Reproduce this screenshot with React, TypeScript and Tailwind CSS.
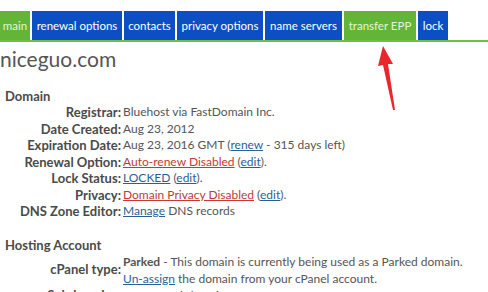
import React from "react";

const tabs = [
  { label: "main", w: "w-[30px]", active: true },
  { label: "renewal options", w: "w-[90px]" },
  { label: "contacts", w: "w-[51px]" },
  { label: "privacy options", w: "w-[86px]" },
  { label: "name servers", w: "w-[77px]" },
  { label: "transfer EPP", w: "w-[72px]", active: true },
  { label: "lock", w: "w-[30px]" },
];

function Row({ label, children }: { label: string; children: React.ReactNode }) {
  return (
    <div className="grid grid-cols-[122px_1fr] h-[16.5px] items-center">
      <div className="text-right font-bold text-[13px] text-[#4a4a4a] pr-[1px] whitespace-nowrap">{label}:</div>
      <div className="pl-[1px] whitespace-nowrap">{children}</div>
    </div>
  );
}

const red = "text-[#c23a36] underline";
const blue = "text-[#2d5f96] underline";

export default function App() {
  return (
    <div className="relative w-[488px] h-[292px] overflow-hidden bg-white text-[#555] font-['Lato',sans-serif] text-[12px] leading-[16px]">
      {/* tab bar */}
      <div className="pt-[11px] flex gap-[2px] border-b-2 border-[#6fbf45]">
        {tabs.map((t) => (
          <div
            key={t.label}
            className={`${t.w} h-[29px] flex items-center justify-center whitespace-nowrap text-[11.5px] ${
              t.active ? "bg-[#62b536] text-[#e6f3dc]" : "bg-[#0c4fc2] text-white"
            }`}
          >
            {t.label}
          </div>
        ))}
      </div>

      <h1 className="mt-[3px] text-[21px] leading-[28px] text-[#555]">niceguo.com</h1>

      <h2 className="mt-[15px] ml-[5px] font-bold text-[13px] leading-[16px] text-[#4a4a4a]">Domain</h2>

      <div className="text-[#555]">
        <Row label="Registrar">Bluehost via FastDomain Inc.</Row>
        <Row label="Date Created">Aug 23, 2012</Row>
        <Row label="Expiration Date">
          Aug 23, 2016 GMT (<span className={blue}>renew</span> - 315 days left)
        </Row>
        <Row label="Renewal Option">
          <span className={red}>Auto-renew Disabled</span> (<span className={blue}>edit</span>).
        </Row>
        <Row label="Lock Status">
          <span className={blue}>LOCKED</span> (<span className={blue}>edit</span>).
        </Row>
        <Row label="Privacy">
          <span className={red}>Domain Privacy Disabled</span> (<span className={blue}>edit</span>).
        </Row>
        <Row label="DNS Zone Editor">
          <span className={blue}>Manage</span> DNS records
        </Row>
      </div>

      <h2 className="mt-[17px] ml-[5px] font-bold text-[13px] leading-[16px] text-[#4a4a4a]">Hosting Account</h2>

      <div className="grid grid-cols-[122px_1fr] items-center leading-[17px]">
        <div className="text-right font-bold text-[13px] text-[#4a4a4a] pr-[1px]">cPanel type:</div>
        <div className="pl-[1px] whitespace-nowrap">
          <div>
            <span className="font-bold">Parked</span> - This domain is currently being used as a Parked domain.
          </div>
          <div>
            <span className={blue}>Un-assign</span> the domain from your cPanel account.
          </div>
        </div>
      </div>
      <div className="grid grid-cols-[122px_1fr] items-center leading-[17px]">
        <div className="text-right font-bold text-[13px] text-[#4a4a4a] pr-[1px]">Subdomains:</div>
        <div className="pl-[1px]">
          <span className={blue}>Manage</span> subdomains
        </div>
      </div>

      {/* red arrow annotation */}
      <svg className="absolute left-[370px] top-[42px]" width="40" height="75" viewBox="0 0 40 75">
        <path d="M13 4 L23 22 L18 22 L25 68 L23 68 L13 23 L8 24 Z" fill="#e8262c" />
      </svg>
    </div>
  );
}
